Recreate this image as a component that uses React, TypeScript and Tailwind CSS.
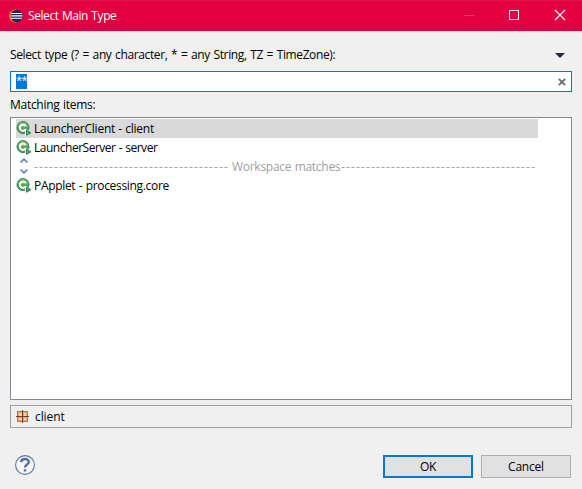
import React from "react";

const DASHES = "-".repeat(39);

function EclipseIcon() {
  return (
    <svg width="15" height="14" viewBox="0 0 15 14" className="block shrink-0">
      <circle cx="6.5" cy="7" r="6.4" fill="#f7941e" />
      <circle cx="7.7" cy="7" r="6.2" fill="#2c2255" />
      <path d="M2 4.5h11M2 6.9h11.5M2 9.3h11" stroke="#fff" strokeWidth="1.1" />
    </svg>
  );
}

function ClassIcon() {
  return (
    <svg width="16" height="16" viewBox="0 0 16 16" className="block shrink-0">
      <circle cx="7" cy="6.6" r="6" fill="#4fa05c" stroke="#38825a" strokeWidth="1" />
      <path d="M2 6.3a5 5 0 0 1 10 0z" fill="#85bd74" />
      <path d="M9.5 4.9A3.1 3.1 0 1 0 9.5 8.5" fill="none" stroke="#fff" strokeWidth="1.9" />
      <path d="M9 7.6v8l6.8-4z" fill="#fff" />
      <path d="M10.5 9.3v5l4.4-2.5z" fill="#62b184" stroke="#247a48" strokeWidth="1" />
    </svg>
  );
}

function PackageIcon() {
  return (
    <svg width="13" height="13" viewBox="0 0 13 13" className="block shrink-0">
      <rect x="1" y="1" width="11" height="11" fill="#b9784c" />
      <path d="M2 2h4v4H2zM7 2h4v4H7zM2 7h4v4H2zM7 7h4v4H7z" fill="#dba871" />
      <path d="M3 3h3v3H3zM8 3h2v3H8zM3 8h3v2H3zM8 8h2v2H8z" fill="#f3d9a4" />
      <path d="M6.5 0v13M0 6.5h13" stroke="#713b33" strokeWidth="1" />
    </svg>
  );
}

function Item({ label, tracking, selected }: { label: string; tracking: string; selected?: boolean }) {
  return (
    <div className={`flex h-[19px] w-[522px] items-center gap-[2px] ${selected ? "bg-[#d9d9d9]" : ""}`}>
      <ClassIcon />
      <span className={`leading-[19px] ${tracking}`}>{label}</span>
    </div>
  );
}

export default function App() {
  return (
    <div className="flex h-[489px] w-[582px] flex-col overflow-hidden whitespace-pre bg-[#f0f0f0] font-['Open_Sans','Noto_Sans',sans-serif] text-[12px] text-black">
      <header className="flex h-[31px] shrink-0 items-center border-t border-[#dc1650] bg-[#e20043] pl-[9px] text-white">
        <EclipseIcon />
        <span className="ml-1 leading-[16px] tracking-[-0.42px] [word-spacing:0.6px]">Select Main Type</span>
        <div className="ml-auto flex h-[30px]">
          <svg width="46" height="30" className="block"><path d="M15 14.5h10" stroke="#f0386a" /></svg>
          <svg width="46" height="30" className="block"><path d="M14.5 9.5h9v9h-9z" fill="none" stroke="#fff" /></svg>
          <svg width="41" height="30" className="block"><path d="M14 9l10 10M24 9l-10 10" fill="none" stroke="#fff" strokeWidth="1.1" /></svg>
        </div>
      </header>

      <main className="flex flex-1 flex-col px-[10px]">
        <div className="mt-[16px] flex h-[16px] items-center justify-between">
          <span className="leading-[16px] tracking-[-0.38px] [word-spacing:0.88px]">Select type (? = any character, * = any String, TZ = TimeZone):</span>
          <svg width="10" height="5" viewBox="0 0 10 5" className="mr-[7px] block"><path d="M0 0h10L5 5z" fill="#30204a" /></svg>
        </div>
        <div className="mt-[8px] flex h-[21px] items-center justify-between border border-[#0078d7] bg-white pl-[5px] pr-[5px]">
          <span className="h-[15px] w-[11px] bg-[#0078d7] text-[11px] leading-[12px] tracking-[-0.6px] text-white">**</span>
          <svg width="8" height="8" viewBox="0 0 8 8" className="block"><path d="M0.8 0.8l6.4 6.4M7.2 0.8L0.8 7.2" stroke="#6c6c6c" strokeWidth="1.9" /></svg>
        </div>
        <span className="mt-[5px] h-[16px] leading-[16px] tracking-[-0.28px] [word-spacing:0.6px]">Matching items:</span>
        <div className="mt-[4px] h-[283px] border border-[#828790] bg-white pl-[5px] pt-[1px]">
          <Item label="LauncherClient - client" tracking="tracking-[-0.24px] [word-spacing:0.4px]" selected />
          <Item label="LauncherServer - server" tracking="tracking-[-0.48px] [word-spacing:0.5px]" />
          <div className="flex h-[19px] w-[522px] items-center text-[#a0a0a0]">
            <svg width="18" height="19" viewBox="0 0 18 19" className="block shrink-0">
              <path d="M4.5 5.5L8 2.2 11.5 5.5M4.5 12.5L8 15.8 11.5 12.5" fill="none" stroke="#617da3" strokeWidth="1.6" />
            </svg>
            <span className="w-[198px] leading-[19px] tracking-[1.14px]">{DASHES}</span>
            <span className="w-[109px] leading-[19px] tracking-[-0.28px] [word-spacing:0.6px]">Workspace matches</span>
            <span className="leading-[19px] tracking-[1.14px]">{DASHES}</span>
          </div>
          <Item label="PApplet - processing.core" tracking="tracking-[-0.32px] [word-spacing:0.6px]" />
        </div>
        <div className="mt-[5px] flex h-[23px] items-center gap-[6px] border border-[#a0a0a0] pl-[5px]">
          <PackageIcon />
          <span className="leading-[21px] tracking-[-0.1px]">client</span>
        </div>
        <footer className="mt-[27px] flex h-[23px] items-start pl-[5px] pr-[1px]">
          <svg width="20" height="20" viewBox="0 0 20 20" className="block">
            <circle cx="10" cy="10" r="9.4" fill="#f5f6f8" stroke="#607493" strokeWidth="1.1" />
            <path d="M6.2 7.1C6.3 2.9 13.8 2.9 13.8 7c0 2.7-3.8 2.5-3.8 5.6M10 14.2v2.4" fill="none" stroke="#586f9c" strokeWidth="2.4" />
          </svg>
          <button className="ml-auto h-[23px] w-[90px] border-2 border-[#0078d7] bg-[#e1e1e1] leading-[19px] tracking-[-0.4px]">OK</button>
          <button className="ml-2 h-[23px] w-[90px] border border-[#adadad] bg-[#e1e1e1] leading-[21px] tracking-[-0.2px]">Cancel</button>
        </footer>
      </main>
    </div>
  );
}
